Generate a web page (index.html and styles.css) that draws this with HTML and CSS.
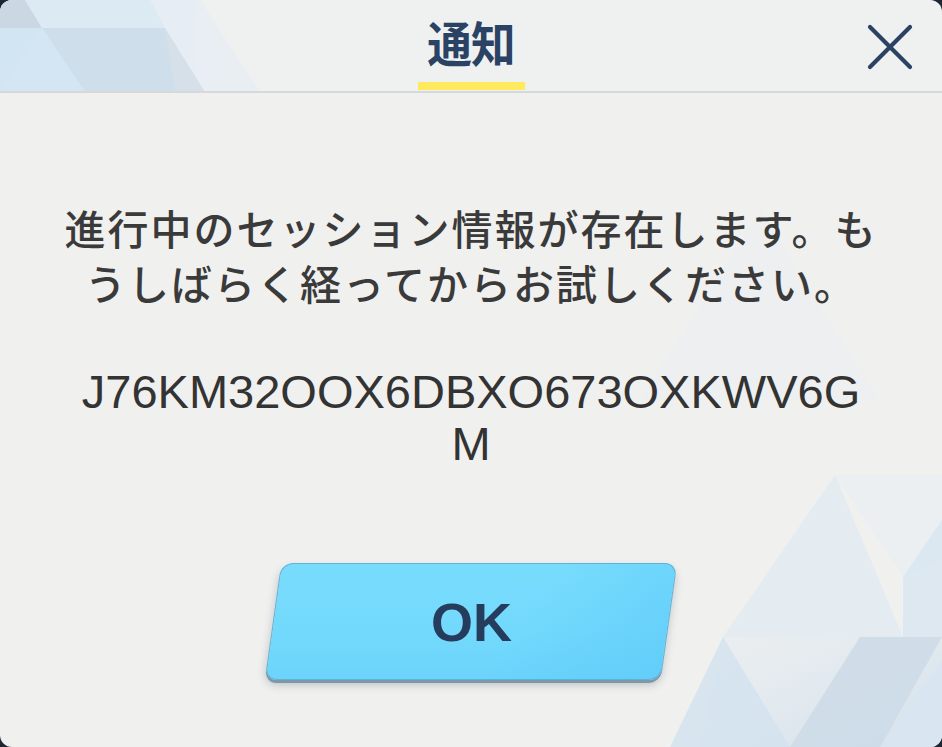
FILE: index.html
```html
<!DOCTYPE html>
<html lang="ja">
<head>
<meta charset="utf-8">
<title>通知</title>
<link rel="stylesheet" href="styles.css">
</head>
<body>
<div class="dialog">
  <svg class="deco" viewBox="0 0 942 747" preserveAspectRatio="none" aria-hidden="true">
    <defs>
      <linearGradient id="fadeTL" x1="0" y1="0" x2="1" y2="0">
        <stop offset="0" stop-color="#c4dcef" stop-opacity="1"/>
        <stop offset="0.6" stop-color="#cfe3f3" stop-opacity="0.9"/>
        <stop offset="1" stop-color="#e8eef5" stop-opacity="0"/>
      </linearGradient>
      <linearGradient id="fadeBR" x1="0" y1="0" x2="1" y2="1">
        <stop offset="0" stop-color="#dce8f2" stop-opacity="0.3"/>
        <stop offset="1" stop-color="#ccdceb" stop-opacity="1"/>
      </linearGradient>
    </defs>
    <polygon points="0,0 200,0 240,92 0,92" fill="url(#fadeTL)"/>
    <polygon points="0,0 25,0 42,28 0,28" fill="#b9cbda"/>
    <polygon points="0,28 42,28 0,92" fill="#c4dff2"/>
    <polygon points="42,28 165,28 205,92 85,92" fill="#bfd4e6"/>
    <polygon points="42,28 85,92 0,92" fill="#c6e0f3"/>
    <polygon points="25,0 150,0 165,28 42,28" fill="#d3e6f5"/>
    <polygon points="150,0 200,0 260,92 205,92 165,28" fill="#e3ecf4" opacity="0.8"/>
    <polygon points="165,28 205,92 175,92" fill="#cdd8e2" opacity="0.7"/>

    <polygon points="835,475 723,637 903,637" fill="#e0eaf2" opacity="0.75"/>
    <polygon points="835,475 942,475 942,560 903,577" fill="#e6eef4" opacity="0.5"/>
    <polygon points="903,577 942,520 942,637 903,637" fill="#d8e6f1" opacity="0.8"/>
    <polygon points="723,637 942,637 942,747 700,747" fill="url(#fadeBR)" opacity="0.8"/>
    <polygon points="723,637 790,747 670,747" fill="#d2e2ef" opacity="0.8"/>
    <polygon points="790,747 860,637 942,637 880,747" fill="#cddbe8" opacity="0.85"/>
    <polygon points="880,747 942,660 942,747" fill="#d9e6f1"/>
    <polygon points="640,400 760,210 880,400" fill="#e8eff5" opacity="0.35"/>
  </svg>

  <header class="head">
    <div class="head-side"></div>
    <div class="title-wrap">
      <h1 class="title">通知</h1>
      <div class="title-bar"></div>
    </div>
    <div class="head-side head-right">
      <button class="close" aria-label="閉じる">
        <svg viewBox="0 0 46 46" width="46" height="46">
          <path d="M3 3 L43 43 M43 3 L3 43" stroke="#2b4262" stroke-width="4.2" stroke-linecap="round" fill="none"/>
        </svg>
      </button>
    </div>
  </header>

  <main class="body">
    <p class="message">進行中のセッション情報が存在します。もうしばらく経ってからお試しください。</p>
    <p class="code">J76KM32OOX6DBXO673OXKWV6GM</p>
    <button class="ok"><span class="ok-label">OK</span></button>
  </main>
</div>
</body>
</html>
```

FILE: styles.css
```css
* { box-sizing: border-box; }

html, body {
  margin: 0;
  padding: 0;
  background: #1e2633;
}

.dialog {
  position: relative;
  width: 942px;
  height: 747px;
  border-radius: 12px;
  overflow: hidden;
  background: #f0f0ef;
  display: flex;
  flex-direction: column;
  font-family: "Noto Sans CJK JP", "Noto Sans", sans-serif;
}

.deco {
  position: absolute;
  inset: 0;
  width: 100%;
  height: 100%;
  pointer-events: none;
}

.head {
  position: relative;
  height: 93px;
  display: grid;
  grid-template-columns: 1fr auto 1fr;
  background: rgba(239, 241, 244, 0.35);
  border-bottom: 2px solid #d6d8db;
  flex: none;
}

.head-right {
  display: flex;
  justify-content: flex-end;
  align-items: flex-start;
  padding: 24px 29px 0 0;
}

.close {
  width: 46px;
  height: 46px;
  padding: 0;
  border: 0;
  background: none;
  display: block;
}
.close svg { display: block; }

.title-wrap {
  display: flex;
  flex-direction: column;
  align-items: center;
  padding-top: 17px;
}

.title {
  margin: 0;
  font-size: 48px;
  line-height: 48px;
  font-weight: 700;
  color: #2a4264;
  letter-spacing: -1px;
  transform: scaleX(0.93);
}

.title-bar {
  margin-top: 17px;
  width: 107px;
  height: 8px;
  background: #ffe95c;
}

.body {
  position: relative;
  display: flex;
  flex-direction: column;
  align-items: center;
  padding-top: 107px;
}

.message {
  margin: 0;
  width: 840px;
  text-align: center;
  font-size: 41px;
  line-height: 55px;
  font-weight: 500;
  letter-spacing: 2px;
  color: #3a3a3a;
}

.code {
  margin: 56px 0 0;
  width: 805px;
  text-align: center;
  font-family: "Liberation Sans", Arial, sans-serif;
  font-size: 47px;
  line-height: 52px;
  color: #333333;
  word-break: break-all;
}

.ok {
  margin-top: 93px;
  width: 396px;
  height: 117px;
  border: 1px solid #5cb3d6;
  border-radius: 12px;
  transform: skewX(-8deg);
  background:
    linear-gradient(120deg, rgba(255,255,255,0) 60%, rgba(90,200,250,0.55) 100%),
    linear-gradient(180deg, #78dcfc 0%, #73d9fc 60%, #6cd4fb 100%);
  box-shadow: 0 3px 0 #7e98a8, 0 5px 8px rgba(40, 60, 80, 0.25);
  display: flex;
  align-items: center;
  justify-content: center;
  padding: 0;
}

.ok-label {
  display: block;
  transform: skewX(8deg);
  font-family: "Liberation Sans", Arial, sans-serif;
  font-weight: 700;
  font-size: 54px;
  line-height: 1;
  color: #263c5c;
}
```
